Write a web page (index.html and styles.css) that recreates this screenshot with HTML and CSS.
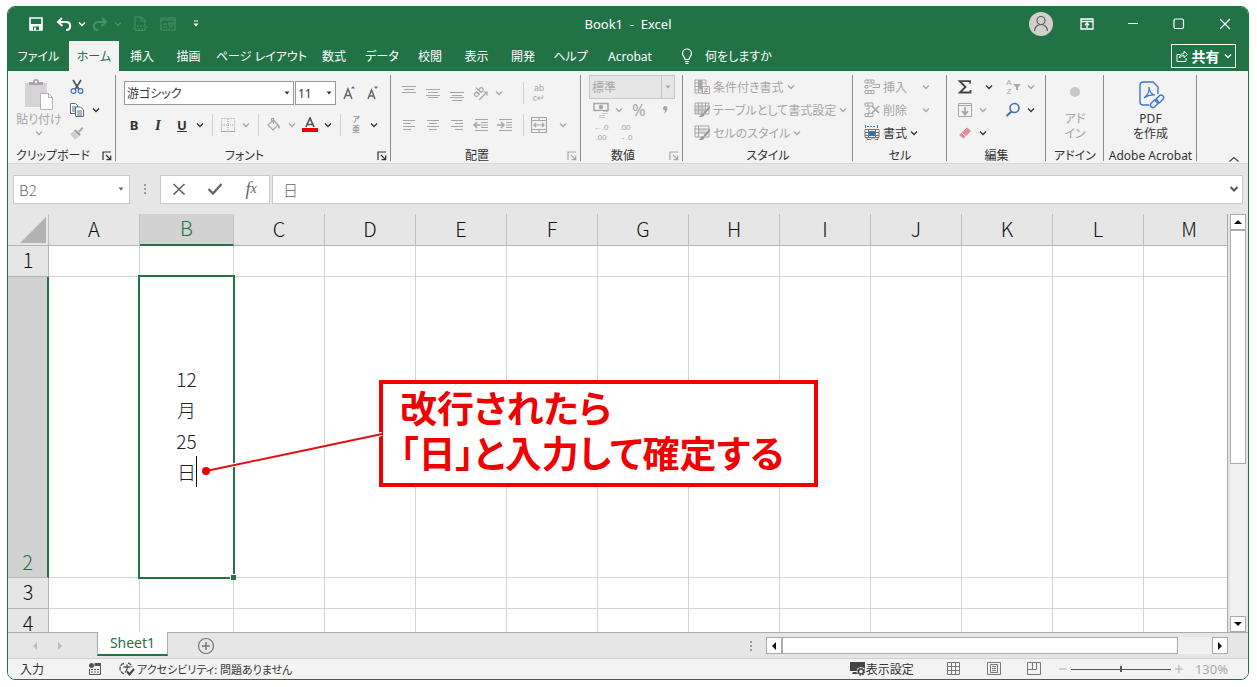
FILE: index.html
```html
<!DOCTYPE html>
<html lang="ja">
<head>
  <meta charset="UTF-8">
  <title>Book1 - Excel</title>
  <link rel="stylesheet" href="styles.css">
</head>
<body>
  <svg class="sprite" width="0" height="0" aria-hidden="true">
    <symbol id="chev" viewBox="0 0 8 8"><path d="M1 2.500 4 5.500l3-3" fill="none" stroke="currentColor" stroke-width="1.300"/></symbol>
    <symbol id="tri" viewBox="0 0 8 8"><path d="M1.500 2.500h5L4 5.500z" fill="currentColor"/></symbol>
    <symbol id="launch" viewBox="0 0 10 10"><path d="M1 9V1h8M4 4l4.500 4.500M8.700 4.500v4.200H4.500" fill="none" stroke="currentColor" stroke-width="1.200"/></symbol>
    <symbol id="dots" viewBox="0 0 4 12"><path d="M1 1h2v2H1zM1 5h2v2H1zM1 9h2v2H1z" fill="currentColor"/></symbol>
  </svg>

  <div class="window">
    <header class="titlebar">
      <div class="quick">
        <button class="q24" aria-label="保存"><svg width="14" height="14" viewBox="0 0 14 14"><path d="M1 1h12v12H1z" fill="none" stroke="currentColor" stroke-width="1.600"/><path d="M1 7h12v6H1z" fill="currentColor"/><path d="M4 9.500h6V13H4z" fill="#217346"/><path d="M5 10.500h2V13H5z" fill="currentColor"/></svg></button>
        <button class="q24" aria-label="元に戻す"><svg width="16" height="16" viewBox="0 0 16 16"><path d="M6 2 2 6l4.500 4M2.500 6H10c3 0 4.200 2 4.200 4S13 14 10 14" fill="none" stroke="currentColor" stroke-width="2"/></svg></button>
        <button class="q12" aria-label="元に戻す一覧"><svg width="8" height="8"><use href="#chev"/></svg></button>
        <button class="q24 dim" aria-label="やり直し"><svg width="16" height="16" viewBox="0 0 16 16"><path d="m10 2 4 4-4.500 4M13.500 6H6C3 6 1.800 8 1.800 10S3 14 6 14" fill="none" stroke="currentColor" stroke-width="2"/></svg></button>
        <button class="q12 dim" aria-label="やり直し一覧"><svg width="8" height="8"><use href="#chev"/></svg></button>
        <button class="q28 dim" aria-label="印刷プレビュー"><svg width="14" height="16" viewBox="0 0 14 16"><path d="M2 9V1h6.500L12 4.500V9M8 1v4h4M2 14.500h10" fill="none" stroke="currentColor"/><path d="M1 10h12v3H1z" fill="none" stroke="currentColor" stroke-dasharray="2 1"/></svg></button>
        <button class="q28 dim" aria-label="フォーム"><svg width="16" height="14" viewBox="0 0 16 14"><path d="M1 1h14v12H1zM1 3h14M3 7h4M3 10h4M9 6h4v2H9zM9 10h4" fill="none" stroke="currentColor" stroke-width="1.200"/></svg></button>
        <button class="q28" aria-label="カスタマイズ"><svg width="8" height="8" viewBox="0 0 8 8"><path d="M2 1h4" stroke="currentColor"/><path d="M1.500 3.500h5L4 6.500z" fill="currentColor"/></svg></button>
      </div>
      <h1 class="title">Book1&nbsp; -&nbsp; Excel</h1>
      <div class="winctl">
        <button aria-label="アカウント"><svg width="24" height="24" viewBox="0 0 24 24"><circle cx="12" cy="12" r="12" fill="#d2d0ce"/><circle cx="12" cy="8.500" r="4" fill="none" stroke="#605e5c" stroke-width="1.200"/><path d="M5.500 19c0-4 3-6.500 6.500-6.500s6.500 2.500 6.500 6.500" fill="none" stroke="#605e5c" stroke-width="1.200"/></svg></button>
        <button aria-label="リボンの表示"><svg width="14" height="12" viewBox="0 0 14 12"><path d="M1 1h12v10H1zM1 3.500h12M7 10V5M4.800 7.200 7 5l2.200 2.200" fill="none" stroke="currentColor" stroke-width="1.300"/></svg></button>
        <button aria-label="最小化"><svg width="10" height="10" viewBox="0 0 10 10"><path d="M0 4.500h10" stroke="currentColor"/></svg></button>
        <button aria-label="最大化"><svg width="12" height="12" viewBox="0 0 12 12"><rect x="1" y="1" width="9.500" height="9.500" rx="1.500" fill="none" stroke="currentColor" stroke-width="1.200"/></svg></button>
        <button aria-label="閉じる"><svg width="12" height="12" viewBox="0 0 12 12"><path d="m1 1 10 10M11 1 1 11" stroke="currentColor" stroke-width="1.200"/></svg></button>
      </div>
    </header>

    <nav class="tabs">
      <div class="tablist">
        <a href="#">ファイル</a><a href="#" class="on">ホーム</a><a href="#">挿入</a><a href="#">描画</a><a href="#">ページ レイアウト</a><a href="#">数式</a><a href="#">データ</a><a href="#">校閲</a><a href="#">表示</a><a href="#">開発</a><a href="#">ヘルプ</a><a href="#">Acrobat</a>
      </div>
      <a href="#" class="tellme"><svg width="12" height="16" viewBox="0 0 12 16"><path d="M4 11.500C4 9 1.500 8.500 1.500 5.500a4.500 4.500 0 0 1 9 0c0 3-2.500 3.500-2.500 6zM4 13.500h4M4.500 15.300h3" fill="none" stroke="currentColor" stroke-width="1.200"/></svg>何をしますか</a>
      <button class="share"><svg width="12" height="12" viewBox="0 0 12 12"><path d="M4 4.500H1v7h9V8" fill="none" stroke="currentColor"/><path d="M3.500 8c0-3 2-4.500 4.500-4.500V1.200L11.500 4.500 8 7.500V5.500C6 5.500 4.500 6.500 3.500 8z" fill="none" stroke="currentColor"/></svg>共有<svg width="8" height="8"><use href="#chev"/></svg></button>
    </nav>

    <section class="ribbon">
      <div class="group g-clip">
        <div class="body">
          <button class="big off"><svg width="28" height="32" viewBox="0 0 28 32"><path d="M0 4h22v24H0z" fill="#d6d3d6"/><path d="M4 6V3h4a3 3 0 0 1 6 0h4v3z" fill="#a8a6a8"/><circle cx="11" cy="3" r="1.200" fill="#f3f3f3"/><path d="M15.500 14.500h8l4 4v12h-12z" fill="#fff" stroke="#b5b3b5"/><path d="M23.500 14.500v4h4" fill="none" stroke="#b5b3b5"/></svg><span>貼り付け</span><svg width="8" height="8"><use href="#chev"/></svg></button>
          <div class="stack">
            <button aria-label="切り取り"><svg width="14" height="16" viewBox="0 0 14 16"><path d="m3 1 6 9.500M11 1 5 10.500" stroke="#555" stroke-width="1.700"/><circle cx="3.500" cy="12" r="2.400" fill="none" stroke="#4472b8" stroke-width="1.200"/><circle cx="10.500" cy="12" r="2.400" fill="none" stroke="#4472b8" stroke-width="1.200"/></svg></button>
            <button aria-label="コピー"><svg width="14" height="16" viewBox="0 0 14 16"><path d="M.5 1.500h5l2 2v8h-7z" fill="#fff" stroke="#666"/><path d="M2 5h4M2 7h4M2 9h4" stroke="#4472b8"/><path d="M5.500 5h5l3 3v6.500h-8z" fill="#fff" stroke="#666"/><path d="M7 9h5M7 11h5M7 13h5" stroke="#4472b8"/></svg></button>
            <button aria-label="書式のコピー"><svg width="14" height="14" viewBox="0 0 14 14"><path d="m8 5 4-4 1.500 1.500-4 4z" fill="#aaa"/><path d="m5.500 3.500 5.500 5-1.500 1.500L4 5z" fill="#999"/><path d="M3.500 5.500 9 10.500 5 13.500 0 8z" fill="#d0ced0"/></svg></button>
          </div>
          <button class="q12 mid" aria-label="コピーのオプション"><svg width="8" height="8"><use href="#chev"/></svg></button>
        </div>
        <div class="name"><span>クリップボード</span><button aria-label="クリップボードの設定"><svg width="10" height="10"><use href="#launch"/></svg></button></div>
      </div>

      <div class="group g-font">
        <div class="body rows2">
          <div class="row">
            <label class="combo fontname"><select aria-label="フォント"><option>游ゴシック</option></select><svg width="8" height="8"><use href="#tri"/></svg></label>
            <label class="combo fontsize"><select aria-label="フォント サイズ"><option>11</option></select><svg width="8" height="8"><use href="#tri"/></svg></label>
            <button class="q24" aria-label="拡大"><svg width="16" height="16" viewBox="0 0 16 16"><path d="m4 14 4-10 4 10M5.300 10.500h5.400" fill="none" stroke="#666" stroke-width="1.500"/><path d="M11 3.500h4L13 1z" fill="#4472b8"/></svg></button>
            <button class="q24" aria-label="縮小"><svg width="16" height="16" viewBox="0 0 16 16"><path d="m4 14 3.500-9 3.500 9M5.200 11h4.600" fill="none" stroke="#666" stroke-width="1.500"/><path d="M10 1.500h4L12 4z" fill="#4472b8"/></svg></button>
          </div>
          <div class="row">
            <button class="q24 b">B</button>
            <button class="q24 i">I</button>
            <button class="q24 u">U</button>
            <button class="q12" aria-label="下線の種類"><svg width="8" height="8"><use href="#chev"/></svg></button>
            <i class="sep"></i>
            <button class="q24 off" aria-label="罫線"><svg width="14" height="14" viewBox="0 0 14 14"><path d="M.5.500h13v13H.500zM7 1v12M1 7h12" fill="none" stroke="currentColor" stroke-dasharray="1 1"/><path d="M0 13.500h14" stroke="currentColor"/></svg></button>
            <button class="q12 off" aria-label="罫線の種類"><svg width="8" height="8"><use href="#chev"/></svg></button>
            <i class="sep"></i>
            <button class="q24 off" aria-label="塗りつぶし"><svg width="14" height="16" viewBox="0 0 14 16"><path d="M6.500 3 11 8l-5 5-5-5zM4.500 5V1.500h2V7" fill="none" stroke="currentColor" stroke-width="1.200"/><path d="M11 7c2 2 2.500 3.500 1.500 4.500S10.500 10 11 7z" fill="currentColor"/></svg></button>
            <button class="q12 off" aria-label="塗りつぶしの色"><svg width="8" height="8"><use href="#chev"/></svg></button>
            <button class="q24" aria-label="フォントの色"><svg width="16" height="16" viewBox="0 0 16 16"><path d="m4 10 4-9 4 9M5.300 7.500h5.400" fill="none" stroke="#555" stroke-width="1.700"/><path d="M0 11h16v4H0z" fill="#f00000"/></svg></button>
            <button class="q12" aria-label="フォントの色の種類"><svg width="8" height="8"><use href="#chev"/></svg></button>
            <i class="sep"></i>
            <button class="q24 ruby"><span>ア</span><span>亜</span></button>
            <button class="q12" aria-label="ふりがなの設定"><svg width="8" height="8"><use href="#chev"/></svg></button>
          </div>
        </div>
        <div class="name"><span>フォント</span><button aria-label="フォントの設定"><svg width="10" height="10"><use href="#launch"/></svg></button></div>
      </div>

      <div class="group g-align off">
        <div class="body rows2">
          <div class="row">
            <button class="q24" aria-label="上揃え"><svg width="16" height="16" viewBox="0 0 16 16"><path d="M1 1.500h14M3 4.500h10M1 7.500h14" stroke="currentColor"/></svg></button>
            <button class="q24" aria-label="上下中央揃え"><svg width="16" height="16" viewBox="0 0 16 16"><path d="M1 4.500h14M3 7.500h10M1 10.500h14M3 12.500h10" stroke="currentColor"/></svg></button>
            <button class="q24" aria-label="下揃え"><svg width="16" height="16" viewBox="0 0 16 16"><path d="M1 7.500h14M3 10.500h10M1 12.500h14M3 15.500h10" stroke="currentColor"/></svg></button>
            <button class="q24" aria-label="方向"><svg width="16" height="16" viewBox="0 0 16 16"><g transform="rotate(-45 7 8)" fill="none" stroke="currentColor" stroke-width="1.200"><circle cx="3.500" cy="6.500" r="2"/><path d="M5.700 4.300v4.500M8 1.500v7.300"/><circle cx="10.200" cy="6.500" r="2"/></g><path d="m6 15 8-8M10.500 7H14v3.500" fill="none" stroke="currentColor" stroke-width="1.200"/></svg></button>
            <button class="q12" aria-label="方向の種類"><svg width="8" height="8"><use href="#chev"/></svg></button>
            <i class="sep wide"></i>
            <button class="q24 wrap"><span>ab</span><span>c↵</span></button>
          </div>
          <div class="row">
            <button class="q24" aria-label="左揃え"><svg width="12" height="10" viewBox="0 0 12 10"><path d="M0 .5h12M0 3.500h8M0 6.500h12M0 9.500h8" stroke="currentColor"/></svg></button>
            <button class="q24" aria-label="中央揃え"><svg width="12" height="10" viewBox="0 0 12 10"><path d="M0 .5h12M2 3.500h8M0 6.500h12M2 9.500h8" stroke="currentColor"/></svg></button>
            <button class="q24" aria-label="右揃え"><svg width="12" height="10" viewBox="0 0 12 10"><path d="M0 .5h12M4 3.500h8M0 6.500h12M4 9.500h8" stroke="currentColor"/></svg></button>
            <button class="q24" aria-label="インデントを減らす"><svg width="16" height="12" viewBox="0 0 16 12"><path d="M2 .5h13M8 3.500h7M8 6h7M8 8.500h7M2 11.500h13" stroke="currentColor"/><path d="M7.500 6H1M4 3 1 6l3 3" fill="none" stroke="currentColor" stroke-width="1.500"/></svg></button>
            <button class="q24" aria-label="インデントを増やす"><svg width="16" height="12" viewBox="0 0 16 12"><path d="M2 .5h13M9 3.500h6M9 6h6M9 8.500h6M2 11.500h13" stroke="currentColor"/><path d="M0 6h6.500M4 3l3 3-3 3" fill="none" stroke="currentColor" stroke-width="1.500"/></svg></button>
            <i class="sep"></i>
            <button class="q24" aria-label="セルを結合して中央揃え"><svg width="16" height="16" viewBox="0 0 16 16"><path d="M.5.500h15v15H.500zM.500 3.500h15M.500 12.500h15M8 .5v3M8 12.500v3M3 8h10M5 6 3 8l2 2M11 6l2 2-2 2" fill="none" stroke="currentColor" stroke-width="1.200"/></svg></button>
            <button class="q24" aria-label="結合の種類"><svg width="8" height="8"><use href="#chev"/></svg></button>
          </div>
        </div>
        <div class="name"><span>配置</span><button aria-label="配置の設定"><svg width="10" height="10"><use href="#launch"/></svg></button></div>
      </div>

      <div class="group g-num off">
        <div class="body rows3">
          <label class="combo format"><select aria-label="表示形式"><option>標準</option></select><i></i><svg width="8" height="8"><use href="#tri"/></svg></label>
          <div class="row">
            <button class="q24" aria-label="通貨"><svg width="16" height="16" viewBox="0 0 16 16"><path d="M1 1.500h14v7H1z" fill="none" stroke="currentColor" stroke-width="1.500"/><circle cx="8" cy="5" r="2.200" fill="currentColor"/><path d="M6 9h9v6H6z" fill="#f3f3f3"/><path d="M10 9.500h5M9 11.500h6M6 13.500h6M6 15.500h6" stroke="#c9c6c9"/></svg></button>
            <button class="q12" aria-label="通貨の種類"><svg width="8" height="8"><use href="#chev"/></svg></button>
            <button class="q28 pct">%</button>
            <button class="q24" aria-label="桁区切り"><svg width="8" height="10" viewBox="0 0 8 10"><path d="M2 3a2.200 2.200 0 1 1 4.400.3C6.300 6 5 8 2.500 9c1-1.300 1.500-2.300 1.500-3.500C2.700 5.400 2 4.300 2 3z" fill="currentColor"/></svg></button>
          </div>
          <div class="row">
            <button class="q24 dec"><span>←.0</span><span>.00</span></button>
            <button class="q24 dec"><span>.00</span><span>→.0</span></button>
          </div>
        </div>
        <div class="name"><span>数値</span><button aria-label="数値の設定"><svg width="10" height="10"><use href="#launch"/></svg></button></div>
      </div>

      <div class="group g-style">
        <div class="body rows3 off">
          <button class="cmd"><svg width="16" height="16" viewBox="0 0 16 16"><path d="M1 1h11v13H1zM4.500 1v13M8 1v13M1 4h11M1 7.500h11M1 11h11" fill="none" stroke="currentColor"/><path d="M5 1h3v9H5z" fill="currentColor"/><path d="M8.500 7.500h7v7h-7z" fill="#f3f3f3" stroke="currentColor"/><path d="M10 10h4M10 12.500h4M13.500 8.500l-3 5" stroke="currentColor"/></svg>条件付き書式<svg width="8" height="8"><use href="#chev"/></svg></button>
          <button class="cmd"><svg width="16" height="16" viewBox="0 0 16 16"><path d="M1 4h11v8H1z" fill="#ddd3dd"/><path d="M1 1h14v11H1zM4.500 1v11M8 1v11M11.500 1v11M1 4h14M1 8h14" fill="none" stroke="currentColor"/><path d="m15.500 3.500-6 7 1.500 1.500 5-6zM9 11c-2 0-2 3-4.500 4 3 .5 6-.5 6-2.500z" fill="#999"/></svg>テーブルとして書式設定<svg width="8" height="8"><use href="#chev"/></svg></button>
          <button class="cmd"><svg width="16" height="16" viewBox="0 0 16 16"><path d="M4 4h8v4H4z" fill="#ddd3dd"/><path d="M1 1h14v11H1zM4.500 1v11M1 4h14M1 8h14" fill="none" stroke="currentColor"/><path d="m15.500 3.500-6 7 1.500 1.500 5-6zM9 11c-2 0-2 3-4.500 4 3 .5 6-.5 6-2.500z" fill="#999"/></svg>セルのスタイル<svg width="8" height="8"><use href="#chev"/></svg></button>
        </div>
        <div class="name"><span>スタイル</span></div>
      </div>

      <div class="group g-cell">
        <div class="body rows3">
          <button class="cmd apart off"><svg width="16" height="16" viewBox="0 0 16 16"><path d="M1 1h9v3H1zM1 11.500h9v3H1zM1 6.500h3v2.500H1zM8.500 5.500h7v3h-7M4 1v3M7 1v3M4 11.500v3M7 11.500v3M8 7H5" fill="none" stroke="currentColor"/></svg>挿入<svg width="8" height="8"><use href="#chev"/></svg></button>
          <button class="cmd apart off"><svg width="16" height="16" viewBox="0 0 16 16"><path d="M1 1h8v3H1zM1 11.500h8v3H1zM5 4v3H2M5 8v3M4 1v3M4 11.500v3" fill="none" stroke="currentColor"/><path d="m8 4 7 7M15 4l-7 7" stroke="currentColor" stroke-width="1.600"/></svg>削除<svg width="8" height="8"><use href="#chev"/></svg></button>
          <button class="cmd"><svg width="16" height="16" viewBox="0 0 16 16"><path d="M1.500 0v3M13.500 0v3" stroke="#2e75b6"/><path d="M3 1.500h9" stroke="#2e75b6" stroke-dasharray="2 1"/><path d="M1 4.500h14v8H1zM4.500 4.500v8M11.500 4.500v8M1 7.500h14M1 10.500h14M3 12.500v2h4l2-2 2 2h3v-2" fill="none" stroke="#777"/><path d="M5 6h6v5H5z" fill="#2e75b6"/></svg>書式<svg width="8" height="8"><use href="#chev"/></svg></button>
        </div>
        <div class="name"><span>セル</span></div>
      </div>

      <div class="group g-edit">
        <div class="body rows3">
          <div class="row">
            <button class="q24" aria-label="合計"><svg width="14" height="14" viewBox="0 0 14 14"><path d="M12 3.500V1.200H1.800L7.500 7l-5.700 5.500H12.500V10" fill="none" stroke="#444" stroke-width="1.800"/></svg></button>
            <button class="q24" aria-label="合計の種類"><svg width="8" height="8"><use href="#chev"/></svg></button>
            <button class="q24 az off"><span>A</span><span>Z</span><svg width="8" height="8" viewBox="0 0 8 8"><path d="M0 1h8L5 4v3H3V4z" fill="currentColor"/></svg></button>
            <button class="q12 off" aria-label="並べ替え"><svg width="8" height="8"><use href="#chev"/></svg></button>
          </div>
          <div class="row">
            <button class="q24 off" aria-label="フィル"><svg width="14" height="14" viewBox="0 0 14 14"><path d="M.5.500h13v13H.500zM.500 2.500h13" fill="none" stroke="currentColor"/><path d="M7 4v7.500M4 8l3 3.500L10 8" fill="none" stroke="currentColor" stroke-width="1.800"/></svg></button>
            <button class="q12 off" aria-label="フィルの種類"><svg width="8" height="8"><use href="#chev"/></svg></button>
            <button class="q24 find" aria-label="検索"><svg width="16" height="16" viewBox="0 0 16 16"><circle cx="9.500" cy="6" r="4.500" fill="none" stroke="#4472b8" stroke-width="1.600"/><path d="m6.500 9.500-5 4.500" stroke="#4472b8" stroke-width="2.200"/></svg></button>
            <button class="q12" aria-label="検索の種類"><svg width="8" height="8"><use href="#chev"/></svg></button>
          </div>
          <div class="row">
            <button class="q24" aria-label="クリア"><svg width="14" height="14" viewBox="0 0 14 14"><path d="m1 9 8-7.500L13 5 5.500 12.500z" fill="#e8899a"/><path d="m3.500 6.500 4.200 4" stroke="#fff"/></svg></button>
            <button class="q12" aria-label="クリアの種類"><svg width="8" height="8"><use href="#chev"/></svg></button>
          </div>
        </div>
        <div class="name"><span>編集</span></div>
      </div>

      <div class="group g-addin">
        <div class="body">
          <button class="big off"><svg width="28" height="32" viewBox="0 0 28 32"><circle cx="14" cy="13" r="5" fill="#c8c6c8"/></svg><span>アド<br>イン</span></button>
        </div>
        <div class="name"><span>アドイン</span></div>
      </div>

      <div class="group g-pdf">
        <div class="body">
          <button class="big"><svg width="28" height="32" viewBox="0 0 28 32"><g fill="none" stroke="#3b76d6" stroke-width="1.400"><path d="M12 26H6a3 3 0 0 1-3-3V6a3 3 0 0 1 3-3h10l5 5v7"/><path d="M7 19c4-3 5.500-7 5-11 .5 5 2.500 7.500 6 8-4-.5-7.500.5-11 3z" stroke-width="1.200"/><rect x="13" y="22.500" width="9" height="5" rx="2.500" transform="rotate(-45 17 25)"/><rect x="18" y="18" width="9" height="5" rx="2.500" transform="rotate(-45 22 20)"/></g></svg><span>PDF<br>を作成</span></button>
        </div>
        <div class="name"><span>Adobe Acrobat</span></div>
      </div>
      <button class="collapse" aria-label="リボンを折りたたむ"><svg width="12" height="8" viewBox="0 0 12 8"><path d="m1.500 6.500 4.500-4 4.500 4" fill="none" stroke="#444" stroke-width="1.200"/></svg></button>
    </section>

    <section class="formula">
      <label class="box namebox"><input type="text" value="B2" aria-label="名前ボックス"><svg width="8" height="8"><use href="#tri"/></svg></label>
      <svg class="grip" width="4" height="12"><use href="#dots"/></svg>
      <div class="box fx">
        <button aria-label="キャンセル"><svg width="14" height="12" viewBox="0 0 14 12"><path d="m1.500 1 11 10.500M12.500 1l-11 10.500" stroke="#666" stroke-width="1.700"/></svg></button>
        <button aria-label="入力"><svg width="16" height="12" viewBox="0 0 16 12"><path d="m1.500 6 4.500 4.500L14.500 1" fill="none" stroke="#666" stroke-width="2.400"/></svg></button>
        <button class="fn"><i>f</i><sub>x</sub></button>
      </div>
      <label class="box bar"><input type="text" value="日" aria-label="数式バー"><svg width="10" height="8" viewBox="0 0 10 8"><path d="m1.500 2 3.500 3.500L8.500 2" fill="none" stroke="#555" stroke-width="2"/></svg></label>
    </section>

    <main class="work">
      <div class="sheet">
        <table class="cells">
          <colgroup><col class="c-head"><col><col class="c-b"><col span="11"></colgroup>
          <thead>
            <tr><th class="corner"><svg width="26" height="26" viewBox="0 0 26 26"><path d="M26 0v26H0z" fill="#b2b2b2"/></svg></th><th>A</th><th class="sel">B</th><th>C</th><th>D</th><th>E</th><th>F</th><th>G</th><th>H</th><th>I</th><th>J</th><th>K</th><th>L</th><th>M</th></tr>
          </thead>
          <tbody>
            <tr><th>1</th><td></td><td></td><td></td><td></td><td></td><td></td><td></td><td></td><td></td><td></td><td></td><td></td><td></td></tr>
            <tr class="tall"><th class="sel">2</th><td></td><td class="active">12<br>月<br>25<br>日<span class="caret"></span><span class="frame"></span></td><td></td><td></td><td></td><td></td><td></td><td></td><td></td><td></td><td></td><td></td><td></td></tr>
            <tr><th>3</th><td></td><td></td><td></td><td></td><td></td><td></td><td></td><td></td><td></td><td></td><td></td><td></td><td></td></tr>
            <tr><th>4</th><td></td><td></td><td></td><td></td><td></td><td></td><td></td><td></td><td></td><td></td><td></td><td></td><td></td></tr>
          </tbody>
        </table>
        <div class="callout">改行されたら<br>「日」と入力して確定する</div>
        <svg class="leader" width="186" height="50" viewBox="0 0 186 50"><path d="M8 43 184 6" stroke="#fff" stroke-width="4"/><path d="M8 43 184 6" stroke="#e01010" stroke-width="2"/><circle cx="8" cy="43" r="4" fill="#f00000"/></svg>
      </div>
      <div class="vscroll">
        <button aria-label="上へ"><svg width="10" height="8" viewBox="0 0 10 8"><path d="M1 6h8L5 2z" fill="#111"/></svg></button>
        <div class="thumb"></div>
        <button class="end" aria-label="下へ"><svg width="10" height="8" viewBox="0 0 10 8"><path d="M1 2h8L5 6z" fill="#111"/></svg></button>
      </div>
    </main>

    <div class="sheetbar">
      <button class="arrow" aria-label="前のシート"><svg width="8" height="8" viewBox="0 0 8 8"><path d="M6 0v8L2 4z" fill="#bbb"/></svg></button>
      <button class="arrow" aria-label="次のシート"><svg width="8" height="8" viewBox="0 0 8 8"><path d="M2 0v8l4-4z" fill="#bbb"/></svg></button>
      <a href="#" class="sheettab">Sheet1</a>
      <button class="add" aria-label="新しいシート"><svg width="18" height="18" viewBox="0 0 18 18"><circle cx="9" cy="9" r="7.500" fill="none" stroke="#777" stroke-width="1.200"/><path d="M9 5v8M5 9h8" stroke="#777" stroke-width="1.500"/></svg></button>
      <svg class="grip" width="4" height="12"><use href="#dots"/></svg>
      <div class="hscroll">
        <button aria-label="左へ"><svg width="8" height="10" viewBox="0 0 8 10"><path d="M6 1v8L2 5z" fill="#111"/></svg></button>
        <div class="thumb"></div>
        <button class="end" aria-label="右へ"><svg width="8" height="10" viewBox="0 0 8 10"><path d="M2 1v8l4-4z" fill="#111"/></svg></button>
      </div>
    </div>

    <footer class="status">
      <span class="mode">入力</span>
      <svg class="rec" width="12" height="12" viewBox="0 0 12 12"><path d="M5.500 0H12v3H5.500z" fill="#555"/><circle cx="2.500" cy="2.500" r="2.500" fill="#555"/><path d="M.5 6v5.500h11V3" fill="none" stroke="#555"/><path d="M2 6.500h8M2 9h8" stroke="#555" stroke-dasharray="2 1"/></svg>
      <span class="acc"><svg width="16" height="14" viewBox="0 0 16 14"><path d="M5 1.500C2 2 1 4 1 6.500S2.500 11 5 12M9 1c2 .5 3.500 2 4 4" fill="none" stroke="#555" stroke-width="1.300" stroke-dasharray="4 1"/><path d="M4.500 5h7M8 2.500v5l-2 3" fill="none" stroke="#555" stroke-width="1.300"/><path d="m8 9.500 2.500 3L15 7" fill="none" stroke="#444" stroke-width="2"/></svg>アクセシビリティ: 問題ありません</span>
      <button class="disp"><svg width="16" height="14" viewBox="0 0 16 14"><path d="M0 0h15v9H0zM3 10h4v2H2z" fill="#444"/><circle cx="11" cy="9.500" r="4.500" fill="#f3f3f3"/><circle cx="11" cy="9.500" r="2.500" fill="none" stroke="#444" stroke-width="1.500"/><circle cx="11" cy="9.500" r="3.700" fill="none" stroke="#444" stroke-width="1.200" stroke-dasharray="1.500 1.400"/></svg>表示設定</button>
      <div class="views">
        <button aria-label="標準"><svg width="14" height="14" viewBox="0 0 14 14"><path d="M.5.500h12v12H.500zM4.500.5v12M8.500.5v12M.500 4.500h12M.500 8.500h12" fill="none" stroke="#777"/></svg></button>
        <button aria-label="ページ レイアウト"><svg width="14" height="14" viewBox="0 0 14 14"><path d="M.5.500h13v12H.500zM3.500 2.500h7v8h-7zM5 4.500h4M5 6.500h4M5 8.500h4" fill="none" stroke="#777"/></svg></button>
        <button aria-label="改ページ プレビュー"><svg width="14" height="14" viewBox="0 0 14 14"><path d="M.5.500h13v12H.500zM5.500.5v7M.500 7.500h9v-7" fill="none" stroke="#777"/></svg></button>
      </div>
      <div class="zoom">
        <button aria-label="縮小"><svg width="8" height="8" viewBox="0 0 8 8"><path d="M0 4h8" stroke="#aaa"/></svg></button>
        <input type="range" min="10" max="250" value="130" aria-label="ズーム">
        <button aria-label="拡大"><svg width="8" height="8" viewBox="0 0 8 8"><path d="M0 4h8M4 0v8" stroke="#aaa"/></svg></button>
        <span>130%</span>
      </div>
    </footer>
  </div>
</body>
</html>
```
FILE: styles.css
```css
* {
  box-sizing: border-box;
}
body {
  margin: 0;
  padding: 6px 8px 7px 7px;
  height: 100vh;
  background: #fff;
  font-family: "Noto Sans", "Noto Sans CJK JP", sans-serif;
  font-size: 12px;
  font-feature-settings: "palt";
  color: #333;
  overflow: hidden;
}
button, select, input {
  font: inherit;
  font-feature-settings: inherit;
  color: inherit;
  background: none;
  border: 0;
  padding: 0;
  margin: 0;
}
button {
  display: flex;
  align-items: center;
  justify-content: center;
  white-space: nowrap;
}
a {
  color: inherit;
  text-decoration: none;
  white-space: nowrap;
}
svg {
  display: block;
  flex: none;
}
.sprite {
  position: absolute;
}
.window {
  height: 100%;
  display: flex;
  flex-direction: column;
  border: 1px solid #217346;
  border-radius: 8px;
  overflow: hidden;
  background: #e6e6e6;
}

/* title bar */
.titlebar {
  display: grid;
  grid-template-columns: 1fr auto 1fr;
  align-items: center;
  height: 34px;
  background: #217346;
  color: #fff;
}
.quick {
  display: flex;
  padding-left: 16px;
}
.quick .q24 + .q24 {
  margin-left: 4px;
}
.quick .q12 + .q28 {
  margin-left: 2px;
}
.q12, .q24, .q28 {
  height: 24px;
  flex: none;
}
.q12 { width: 12px; }
.q24 { width: 24px; }
.q28 { width: 28px; }
.dim {
  color: #4a8f68;
}
.title {
  margin: 0;
  font-size: 13px;
  font-weight: normal;
}
.winctl {
  display: flex;
  justify-content: flex-end;
}
.winctl button {
  width: 46px;
  height: 30px;
}

/* tabs */
.tabs {
  display: flex;
  align-items: stretch;
  height: 30px;
  background: #217346;
  color: #fff;
}
.tablist {
  display: grid;
  grid-template-columns: 61px 50px 46px 47px 99px 46px 50px 46px 47px 46px 49px 70px;
}
.tablist a {
  display: flex;
  align-items: center;
  justify-content: center;
}
.tablist .on {
  background: #f3f3f3;
  color: #217346;
}
.tellme {
  display: flex;
  align-items: center;
  gap: 12px;
  margin-left: 16px;
}
.share {
  margin: 3px 12px 3px auto;
  width: 65px;
  gap: 4px;
  border: 1px solid #fff;
  font-size: 14px;
  font-weight: bold;
}

/* ribbon */
.ribbon {
  display: flex;
  height: 93px;
  background: #f3f3f3;
  border-bottom: 1px solid #d8d8d8;
}
.group {
  flex: none;
  display: flex;
  flex-direction: column;
  padding-top: 4px;
  background: linear-gradient(#8a8a8a, #8a8a8a) right 4px / 1px 86px no-repeat;
}
.g-clip { width: 108px; }
.g-font { width: 275px; }
.g-align { width: 190px; }
.g-num { width: 102px; }
.g-style { width: 170px; }
.g-cell { width: 94px; }
.g-edit { width: 99px; }
.g-addin { width: 58px; }
.g-pdf { width: 93px; }
.body {
  flex: none;
  height: 69px;
  display: flex;
}
.rows2 {
  display: grid;
  grid-template-rows: 32px 32px;
  padding: 2px 0 0 6px;
}
.rows3 {
  display: grid;
  grid-template-rows: 23px 23px 23px;
  padding-left: 8px;
}
.row {
  display: flex;
  align-items: center;
}
.name {
  display: flex;
  align-items: center;
  padding-top: 4px;
  line-height: 15px;
  color: #333;
}
.name span {
  flex: 1;
  text-align: center;
  white-space: nowrap;
}
.name button {
  width: 18px;
}
.off {
  color: #a9a5a9;
}
.off .name button {
  color: #a9a5a9;
}
.big {
  flex: 1;
  flex-direction: column;
  justify-content: flex-start;
  padding-top: 4px;
  line-height: 15px;
}
.g-clip .big {
  flex: none;
  width: 62px;
}
.g-clip .big span {
  line-height: 18px;
}
.stack {
  display: grid;
  grid-template-rows: 23px 23px 23px;
}
.g-clip .mid {
  align-self: center;
  margin-left: 6px;
}
.combo {
  display: flex;
  align-items: center;
  height: 24px;
  border: 1px solid #999;
  background: #fff;
  padding-right: 2px;
}
.combo select {
  appearance: none;
  flex: 1;
  min-width: 0;
  padding-left: 2px;
  outline: 0;
}
.fontname {
  width: 170px;
  margin: 0 1px 0 2px;
}
.fontsize {
  width: 41px;
}
.format {
  width: 86px;
  background: #e6e6e6;
  border-color: #c6c6c6;
}
.format i {
  align-self: stretch;
  margin-right: 2px;
  border-left: 1px solid #c6c6c6;
}
.sep {
  width: 1px;
  height: 22px;
  margin: 0 3px 0 6px;
  background: #d0d0d0;
}
.sep.wide {
  margin-left: 18px;
}
.b {
  font-size: 13px;
  font-weight: bold;
}
.i {
  font: italic bold 15px "Liberation Serif", serif;
}
.u {
  font-size: 13px;
  font-weight: bold;
  text-decoration: underline;
}
.ruby, .wrap, .dec {
  flex-direction: column;
  font-family: "Liberation Sans", "Noto Sans CJK JP", sans-serif;
  font-size: 8px;
  line-height: 10px;
}
.wrap {
  font-size: 9px;
}
.ruby {
  color: #777;
}
.pct {
  font-size: 16px;
}
.cmd {
  justify-content: flex-start;
  gap: 3px;
}
.rows3 .cmd {
  margin-left: 3px;
}
.apart svg:last-child {
  margin-left: 12px;
}
.az {
  display: grid;
  grid-template-columns: 8px 8px;
  align-content: center;
  font: 8px "Liberation Sans", sans-serif;
}
.az svg {
  grid-area: 1 / 2 / 3 / 3;
  align-self: center;
}
.g-edit .rows3 {
  padding-left: 6px;
}
.g-edit .find {
  margin-left: 12px;
}
.collapse {
  align-self: flex-end;
  margin: 0 8px 0 auto;
}

/* formula bar */
.formula {
  display: flex;
  align-items: center;
  height: 50px;
  padding: 0 5px;
  color: #666;
}
.box {
  display: flex;
  align-items: center;
  height: 29px;
  border: 1px solid #c9c9c9;
  background: #fff;
}
.box input {
  flex: 1;
  min-width: 0;
  outline: 0;
  font: 300 15px "Noto Sans CJK JP", sans-serif;
}
.namebox {
  width: 117px;
  padding: 0 4px 0 5px;
}
.grip {
  color: #999;
  margin: 0 13px;
}
.fx {
  width: 110px;
  margin-right: 2px;
}
.fx button {
  flex: 1;
}
.fn {
  font: 18px "Liberation Serif", serif;
}
.fn sub {
  font-size: 14px;
  font-style: italic;
}
.bar {
  flex: 1;
  padding: 0 3px 0 10px;
}

/* sheet */
.work {
  flex: 1;
  min-height: 0;
  display: flex;
  padding-right: 2px;
}
.sheet {
  flex: 1;
  min-width: 0;
  position: relative;
  overflow: hidden;
  border-right: 1px solid #ababab;
  font-family: "Noto Sans CJK JP", sans-serif;
}
.cells {
  table-layout: fixed;
  width: 1227px;
  border-spacing: 0;
  background: #fff;
}
.cells col {
  width: 91px;
}
.cells .c-head {
  width: 41px;
}
.cells .c-b {
  width: 94px;
}
.cells th, .cells td {
  height: 31px;
  padding: 0;
  border-right: 1px solid #d4d4d4;
  border-bottom: 1px solid #d4d4d4;
}
.cells th {
  padding-bottom: 2px;
  background: #e6e6e6;
  border-color: #b4b4b4;
  font-size: 20px;
  font-weight: 300;
  line-height: 26px;
  color: #111;
}
.cells thead th {
  height: 32px;
  border-right-color: #c0c0c0;
}
.cells .tall td, .cells .tall th {
  height: 301px;
}
.cells .tall th {
  vertical-align: bottom;
}
.cells th.sel {
  background: #d2d2d2;
  color: #217346;
}
.cells thead .sel {
  border-bottom: 2px solid #217346;
}
.cells tbody .sel {
  border-right: 2px solid #217346;
}
.corner svg {
  margin: 2px 2px 0 auto;
}
.cells .active {
  position: relative;
  padding-bottom: 4px;
  text-align: center;
  font-size: 19px;
  font-weight: 300;
  line-height: 31px;
  color: #222;
}
.caret {
  display: inline-block;
  width: 1px;
  height: 31px;
  margin-right: -1px;
  vertical-align: top;
  background: #111;
}
.frame {
  position: absolute;
  inset: -2px;
  border: 2px solid #217346;
}
.frame::after {
  content: "";
  position: absolute;
  right: -3px;
  bottom: -3px;
  width: 5px;
  height: 5px;
  background: #217346;
  border: solid #fff;
  border-width: 1px 0 0 1px;
}
.callout {
  position: absolute;
  left: 371px;
  top: 166px;
  padding: 1px 30px 8px 17px;
  border: 4px solid #f00000;
  background: #fff;
  color: #f00000;
  font-size: 37px;
  font-weight: 700;
  line-height: 45px;
  white-space: nowrap;
}
.leader {
  position: absolute;
  left: 190px;
  top: 214px;
}

/* scroll bars */
.vscroll {
  width: 16px;
  margin-left: 2px;
  display: flex;
  flex-direction: column;
  background: #f0f0f0;
}
.vscroll button, .hscroll button, .thumb {
  flex: none;
  background: #fff;
  border: 1px solid #ababab;
}
.vscroll button {
  height: 16px;
}
.vscroll .thumb {
  height: 56%;
}
.vscroll .end {
  margin-top: auto;
}
.hscroll {
  display: flex;
  width: 462px;
  height: 17px;
  background: #f0f0f0;
}
.hscroll button {
  width: 16px;
}
.hscroll .thumb {
  width: 396px;
}
.hscroll .end {
  margin-left: auto;
}

/* sheet tabs */
.sheetbar {
  display: flex;
  align-items: center;
  height: 26px;
  padding-right: 20px;
  border-top: 1px solid #ababab;
}
.arrow {
  width: 25px;
}
.arrow:first-child {
  margin-left: 14px;
}
.sheettab {
  align-self: flex-start;
  width: 71px;
  margin-left: 25px;
  margin-top: -1px;
  border: solid #ababab;
  border-width: 0 1px;
  border-bottom: 2px solid #217346;
  background: #fff;
  color: #217346;
  font-size: 14px;
  line-height: 22px;
  text-align: center;
}
.add {
  margin: 0 auto 0 29px;
}

/* status bar */
.status {
  display: flex;
  align-items: center;
  height: 21px;
  padding: 0 20px 0 12px;
  background: #f3f3f3;
  border-top: 1px solid #d0d0d0;
}
.rec {
  margin: 0 18px 0 45px;
}
.acc, .disp {
  display: flex;
  align-items: center;
  gap: 2px;
}
.acc {
  font-size: 11px;
}
.disp {
  margin-left: auto;
  gap: 0;
}
.views {
  display: flex;
  gap: 26px;
  margin: 0 18px 0 33px;
}
.zoom {
  display: flex;
  align-items: center;
  gap: 4px;
  color: #aaa;
}
.zoom span {
  margin-left: 8px;
  font-size: 13px;
}
.zoom input {
  appearance: none;
  width: 100px;
  height: 8px;
  background: linear-gradient(#555, #555) center / 100% 1px no-repeat;
}
.zoom input::-webkit-slider-thumb {
  appearance: none;
  width: 2px;
  height: 6px;
  background: #555;
}
```
